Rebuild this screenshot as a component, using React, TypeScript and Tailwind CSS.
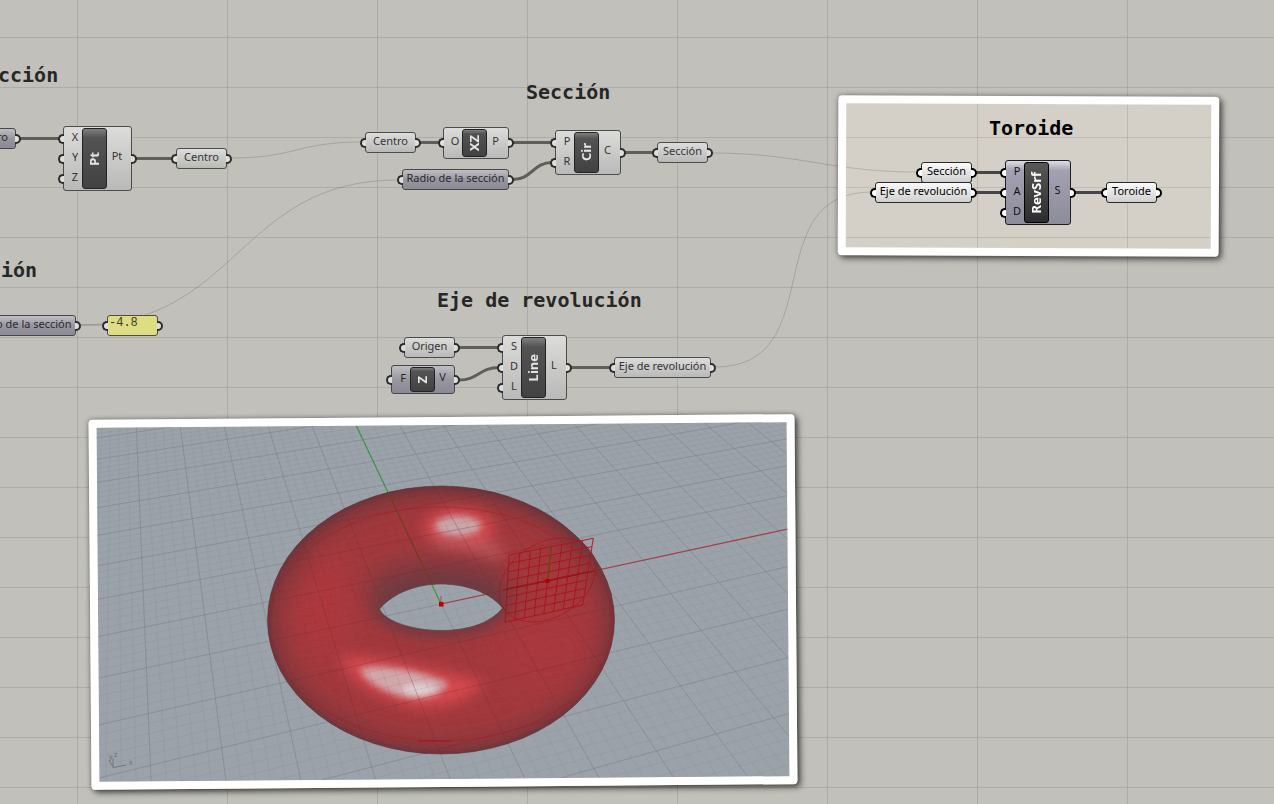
import React from "react";

type Tone = "light" | "violet" | "lightActive" | "violetActive" | "note";

const boxTone: Record<Tone, string> = {
  light: "border-[#4c4c4b] bg-linear-to-b from-[#dcdcda] to-[#b9b9b9] text-[#363435]",
  violet: "border-[#474648] bg-linear-to-b from-[#c0bfc4] via-[#9897a0] via-50% to-[#8b8a95] text-[#2c2a2e]",
  lightActive: "border-[#2a2a2a] bg-linear-to-b from-[#fafafa] to-[#d0d0d0] text-black",
  violetActive: "border-[#1e1e22] bg-linear-to-b from-[#dedde6] via-[#a3a1b1] via-15% to-[#8d8c9b] text-[#111]",
  note: "border-[#4e4d40] bg-[#dfdd83] text-[#3c3b2c]",
};

const gripTone: Record<Tone, string> = {
  light: "border-[#2d2d2d] bg-[#dededc]",
  violet: "border-[#2d2d2d] bg-[#dededc]",
  lightActive: "border-black bg-white",
  violetActive: "border-black bg-white",
  note: "border-[#2d2d2d] bg-[#dededc]",
};

function Grip({ side, tone }: { side: "in" | "out"; tone: Tone }) {
  const place =
    side === "in"
      ? "right-full rounded-l-full border-r-0"
      : "left-full rounded-r-full border-l-0";
  return (
    <span
      className={`absolute top-1/2 h-[10px] w-[6px] -translate-y-1/2 border-2 ${place} ${gripTone[tone]}`}
    />
  );
}

function Param({ at, label, tone = "light" }: { at: string; label: string; tone?: Tone }) {
  const text =
    tone === "note"
      ? "justify-start items-start pl-px font-['Liberation_Mono',monospace] text-xs leading-[14px]"
      : "items-center justify-center pb-[3px] font-['Noto_Sans',sans-serif] text-[11px] leading-4";
  return (
    <div className={`absolute flex h-[21px] rounded-[3px] border whitespace-nowrap ${at} ${boxTone[tone]} ${text}`}>
      <Grip side="in" tone={tone} />
      {label}
      <Grip side="out" tone={tone} />
    </div>
  );
}

function Component({
  at,
  name,
  inputs,
  output,
  tone = "light",
}: {
  at: string;
  name: string;
  inputs: string[];
  output: string;
  tone?: Tone;
}) {
  const active = tone === "violetActive";
  const core = active
    ? "border-black from-[#585858] to-[#2d2d2d] text-white"
    : "border-[#222] from-[#808080] via-[#535353] via-15% to-[#424242] text-[#e4e4e4]";
  return (
    <div
      className={`absolute flex rounded-[3px] border font-['Noto_Sans',sans-serif] text-[11px] ${at} ${boxTone[tone]}`}
    >
      <div className="flex w-[18px] flex-col justify-center">
        {inputs.map((input) => (
          <div key={input} className="relative flex h-5 items-center justify-center leading-4">
            <Grip side="in" tone={tone} />
            <span className="pb-1 pl-1">{input}</span>
          </div>
        ))}
      </div>
      <div
        className={`my-px flex w-[25px] items-center justify-center rounded-[3px] border bg-linear-to-b ${core}`}
      >
        <span className="rotate-180 pl-0.5 text-[13px] leading-4 font-bold [writing-mode:vertical-rl]">{name}</span>
      </div>
      <div className="relative flex flex-1 items-center justify-center">
        <span className="pr-1 pb-1">{output}</span>
        <Grip side="out" tone={tone} />
      </div>
    </div>
  );
}

function Heading({ at, children, active }: { at: string; children: string; active?: boolean }) {
  return (
    <h2
      className={`absolute font-['DejaVu_Sans_Mono',monospace] text-[20px] leading-6 font-bold whitespace-nowrap ${at} ${
        active ? "text-black" : "text-[#272726]"
      }`}
    >
      {children}
    </h2>
  );
}

function Grid({ id }: { id: string }) {
  return (
    <>
      <pattern id={id} x="77" y="37" width="150" height="50" patternUnits="userSpaceOnUse">
        <path d="M0.5 0V50M0 0.5H150" stroke="#000" strokeOpacity="0.1" fill="none" />
      </pattern>
      <rect width="4000" height="3000" fill={`url(#${id})`} />
    </>
  );
}

function LongWires() {
  return (
    <g fill="none" stroke="#000" strokeOpacity="0.15">
      <path d="M231 158C296 158 297 142 362 142" />
      <path d="M80 325C238 325 238 180 398 180" />
      <path d="M712 153C800 153 830 172 917 172" />
      <path d="M715 367C832 367 755 192 872 192" />
    </g>
  );
}

/* Ground plane: projects plane units to scene coordinates. */
const project = (x: number, y: number) => {
  const d = 1 + 0.01713 * x + 0.05294 * y;
  const px = 441.3 + (53.93 * x - 17.25 * y) / d;
  const py = 604 + (-11.67 * x - 36.05 * y) / d;
  return `${px.toFixed(1)} ${py.toFixed(1)}`;
};

const range = (a: number, b: number) => Array.from({ length: b - a + 1 }, (_, i) => a + i);
const xs = range(-70, 70);
const ys = range(-40, 70);
const groundPath = (major: boolean) =>
  xs
    .filter((i) => (i % 5 === 0) === major)
    .map((i) => `M${project(i / 5, -8)}L${project(i / 5, 14)}`)
    .concat(
      ys.filter((i) => (i % 5 === 0) === major).map((i) => `M${project(-14, i / 5)}L${project(14, i / 5)}`),
    )
    .join("");
const majorGround = groundPath(true);
const minorGround = groundPath(false);

const corners = { tl: [509.3, 555], tr: [593.3, 538.3], br: [582.7, 605], bl: [505, 622.3] };
const mix = (a: number[], b: number[], t: number) => [a[0] + (b[0] - a[0]) * t, a[1] + (b[1] - a[1]) * t];
const planePath = range(0, 8)
  .map((i) => {
    const t = i / 8;
    return `M${mix(corners.tl, corners.tr, t)}L${mix(corners.bl, corners.br, t)}M${mix(corners.tl, corners.bl, t)}L${mix(corners.tr, corners.br, t)}`;
  })
  .join("");
const sectionCircle = range(0, 48)
  .map((i) => {
    const a = (i / 48) * Math.PI * 2;
    const x = 547.5 + 48 * Math.cos(a) + 4 * Math.sin(a);
    const y = 580 - 9 * Math.cos(a) - 41 * Math.sin(a);
    return `${i ? "L" : "M"}${x.toFixed(1)} ${y.toFixed(1)}`;
  })
  .join("");

const hole =
  "M379.5 609C394 592 418 584 441 584C465 584 490 592 502.5 608C490 624 466 630.5 441 630.5C415 630.5 385 622 379.5 609Z";
const body = "M267.5 620A173.5 134 0 0 1 614.5 620A173.5 134 0 0 1 267.5 620Z";

function Scene() {
  return (
    <svg viewBox="98 425 690 354" className="block h-full w-full" preserveAspectRatio="xMidYMid slice" role="img" aria-label="Toroide">
      <defs>
        <clipPath id="torus">
          <path d={body + hole} clipRule="evenodd" />
        </clipPath>
        <filter id="b3" x="-50%" y="-50%" width="200%" height="200%"><feGaussianBlur stdDeviation="3" /></filter>
        <filter id="b6" x="-50%" y="-50%" width="200%" height="200%"><feGaussianBlur stdDeviation="7" /></filter>
        <filter id="b12" x="-50%" y="-50%" width="200%" height="200%"><feGaussianBlur stdDeviation="13" /></filter>
      </defs>
      <rect x="80" y="405" width="730" height="400" fill="#9ba2a9" />
      <g transform="rotate(0.47 443 602)">
        <path d={minorGround} stroke="#848a92" strokeOpacity="0.25" strokeWidth="0.8" fill="none" />
        <path d={majorGround} stroke="#7b7b85" strokeOpacity="0.5" fill="none" />
        <path d="M356 425L441 604" stroke="#3c9a45" strokeWidth="1.2" />
        <path d="M441 604L790 528.5" stroke="#a63e45" strokeWidth="1.2" />
        <g clipPath="url(#torus)">
          <path d={body} fill="#a3393d" />
          <g filter="url(#b12)">
            <ellipse cx="325" cy="605" rx="24" ry="48" fill="#ad393c" />
            <ellipse cx="545" cy="650" rx="50" ry="40" fill="#a8393d" />
            <ellipse cx="441" cy="594" rx="76" ry="34" fill="#743a40" />
            <path d="M280 580C310 500 380 472 441 474C500 474 560 490 600 560" stroke="#7d373c" strokeWidth="24" fill="none" />
            <path d={body} fill="none" stroke="#63353b" strokeWidth="15" />
          </g>
          <path d={hole} fill="none" stroke="#683b42" strokeWidth="9" filter="url(#b6)" />
          <path d={body} fill="none" stroke="#5b343a" strokeWidth="4" filter="url(#b3)" />
          <g filter="url(#b6)">
            <ellipse cx="459" cy="527" rx="35" ry="18" fill="#d84b50" />
            <path d="M435 540C460 542 485 545 502 554" stroke="#bf5a5f" strokeWidth="12" fill="none" />
            <path d="M340 656C380 656 440 672 485 682C465 706 425 714 395 700C370 692 348 680 340 656Z" fill="#d64a4e" />
          </g>
          <g filter="url(#b3)">
            <ellipse cx="458" cy="526" rx="23" ry="10" fill="#cba6a9" />
            <path d="M360 669C385 662 430 674 448 683C442 699 412 702 391 693C376 687 364 679 360 669Z" fill="#d0a7aa" />
            <ellipse cx="419" cy="690" rx="17" ry="6" fill="#e2d0d3" />
          </g>
          <path d={minorGround} stroke="#7b3940" strokeOpacity="0.12" strokeWidth="0.8" fill="none" />
          <path d={majorGround} stroke="#702f36" strokeOpacity="0.3" fill="none" />
          <path d="M387 490L429 579" stroke="#773d20" strokeWidth="1.3" />
          <ellipse cx="441" cy="624" rx="172" ry="117" fill="none" stroke="#b5161d" strokeOpacity="0.45" />
          <path d="M418 741H452" stroke="#a3161d" />
        </g>
        <path d={body} fill="none" stroke="#55333a" strokeOpacity="0.55" />
        <path d={hole} fill="none" stroke="#5b4b52" strokeOpacity="0.7" />
        <path d={planePath} stroke="#aa131a" strokeOpacity="0.9" fill="none" />
        <path d={sectionCircle} stroke="#a9141b" strokeOpacity="0.7" fill="none" />
        <path d="M503 590L548 581L594 571" stroke="#970e13" strokeWidth="1.2" fill="none" />
        <path d="M551.3 547L548 580" stroke="#6b4a10" strokeWidth="1.5" />
        <rect x="545.5" y="579" width="4" height="4" fill="#a00" />
        <path d="M441 604V596" stroke="#b44" />
        <rect x="439" y="602" width="4.500" height="4.500" fill="#b00008" />
        <path d="M126.500 765L113 767.500V758M113 767L109 760" fill="none" stroke="#73787d" />
        <g className="fill-[#6b7076] font-['Liberation_Sans',sans-serif] text-[7px]">
          <text x="129" y="765">x</text>
          <text x="114" y="757">z</text>
          <text x="109" y="759">y</text>
        </g>
      </g>
    </svg>
  );
}

export default function App() {
  return (
    <main className="relative h-screen w-full overflow-hidden bg-[#c1c0bb]">
      <svg className="absolute inset-0 h-full w-full" aria-hidden="true">
        <Grid id="canvasGrid" />
        <LongWires />
        <path d="M80 325H104" stroke="#000" strokeOpacity="0.2" />
        <g fill="none" stroke="#5f5e5a" strokeWidth="3">
          <path d="M19 138.500H60M135 158.500H173M420 142.500H440M513 142.500H552M625 152.500H654M459 347.500H499M570 367.500H611" />
          <path d="M513 179.500C532 179.500 533 162.500 552 162.500M459 380C478 380 480 367.500 499 367.500" />
        </g>
      </svg>

      <div className="absolute top-[96px] left-[838px] h-[160px] w-[381px] rotate-[0.25deg] overflow-hidden rounded-[4px] border-8 border-white bg-[#d4d0c8] shadow-[3px_3px_6px_rgba(0,0,0,0.55),0_0_5px_rgba(0,0,0,0.35)]">
        <svg viewBox="846 104 365 144" className="block h-full w-full" preserveAspectRatio="xMinYMin slice" aria-hidden="true">
          <g transform="rotate(-0.25 1028 176)">
            <Grid id="groupGrid" />
            <LongWires />
            <path d="M976 172.500H1002M976 192.500H1002M1074 192.500H1103" stroke="#464646" strokeWidth="3" />
          </g>
        </svg>
      </div>

      <Heading at="top-[63px] left-[-2px]">cción</Heading>
      <Heading at="top-[258px] left-[1px]">ión</Heading>
      <Heading at="top-[80px] left-[526px]">Sección</Heading>
      <Heading at="top-[288px] left-[437px]">Eje de revolución</Heading>
      <Heading at="top-[116px] left-[989px]" active>Toroide</Heading>

      <Param at="top-[128px] left-[-35px] w-[51px]" label="Centro" tone="violet" />
      <Component at="top-[126px] left-[63px] h-[65px] w-[69px]" name="Pt" inputs={["X", "Y", "Z"]} output="Pt" />
      <Param at="top-[148px] left-[176px] w-[51px]" label="Centro" />
      <Param at="top-[132px] left-[365px] w-[51px]" label="Centro" />
      <Component at="top-[127px] left-[443px] h-[32px] w-[66px]" name="XZ" inputs={["O"]} output="P" />
      <Component at="top-[130px] left-[555px] h-[45px] w-[66px]" name="Cir" inputs={["P", "R"]} output="C" />
      <Param at="top-[142px] left-[657px] w-[51px]" label="Sección" />
      <Param at="top-[169px] left-[402px] w-[107px]" label="Radio de la sección" tone="violet" />
      <Param at="top-[315px] left-[-31px] w-[107px]" label="Radio de la sección" tone="violet" />
      <Param at="top-[315px] left-[107px] w-[51px]" label="-4.8" tone="note" />
      <Param at="top-[337px] left-[404px] w-[51px]" label="Origen" />
      <Component at="top-[365px] left-[391px] h-[29px] w-[64px]" name="Z" inputs={["F"]} output="V" tone="violet" />
      <Component at="top-[335px] left-[502px] h-[65px] w-[65px]" name="Line" inputs={["S", "D", "L"]} output="L" />
      <Param at="top-[357px] left-[614px] w-[97px]" label="Eje de revolución" />

      <Param at="top-[162px] left-[921px] w-[51px]" label="Sección" tone="lightActive" />
      <Param at="top-[182px] left-[875px] w-[97px]" label="Eje de revolución" tone="lightActive" />
      <Component
        at="top-[160px] left-[1005px] h-[65px] w-[66px]"
        name="RevSrf"
        inputs={["P", "A", "D"]}
        output="S"
        tone="violetActive"
      />
      <Param at="top-[182px] left-[1106px] w-[51px]" label="Toroide" tone="lightActive" />

      <div className="absolute top-[417px] left-[90px] h-[370px] w-[706px] rotate-[-0.47deg] overflow-hidden rounded-[4px] border-8 border-white shadow-[3px_3px_6px_rgba(0,0,0,0.6),0_0_5px_rgba(0,0,0,0.35)]">
        <Scene />
      </div>
    </main>
  );
}
